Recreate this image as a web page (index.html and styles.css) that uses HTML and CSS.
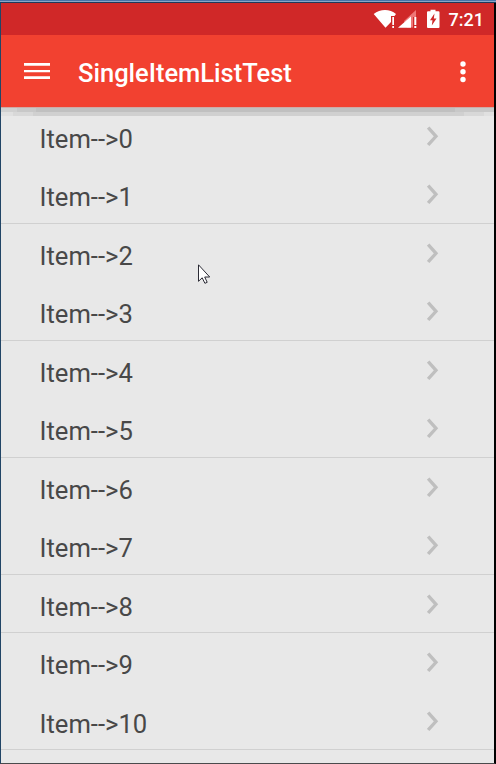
FILE: index.html
```html
<!DOCTYPE html>
<html lang="en">
<head>
<meta charset="utf-8">
<title>SingleItemListTest</title>
<link rel="stylesheet" href="styles.css">
</head>
<body>
<div class="desktop-strip"></div>
<div class="device">
  <header class="status-bar">
    <svg class="status-icons" width="68" height="24" viewBox="372 7 68 24" aria-hidden="true">
      <path fill="#fff" d="M373.700 14C377 11.300 381 10 385 10s8 1.300 11 4l-1.500 2H391v6L385.500 27.700z"/>
      <path fill="#fff" d="M392.300 17h1.700v8h-1.700zM392.300 26h1.700v2h-1.700z"/>
      <path fill="#e77" d="M404 21L416 10v7h-3v10.500h-6z"/>
      <path fill="#fff" d="M398 27.700L411 16.500v11.200z"/>
      <path fill="#fff" d="M414.300 17h2v8h-2zM414.300 26h2v2h-2z"/>
      <path fill="#fff" fill-rule="evenodd" d="M430.500 9.700h5v1.600h3q1 0 1 1V27q0 1-1 1h-10.500q-1 0-1-1V12.300q0-1 1-1h2.500zM434.500 13.500L430 20.300h2.500l-.7 5.200 4.700-7h-2.700z"/>
    </svg>
    <span class="clock">7:21</span>
  </header>
  <div class="toolbar">
    <svg class="menu" width="26" height="16" viewBox="0 0 26 16" aria-hidden="true">
      <path fill="#fff" d="M0 0h26v2.700H0zM0 7h26v2.300H0zM0 13.300h26V16H0z"/>
    </svg>
    <h1 class="title">SingleItemListTest</h1>
    <svg class="overflow" width="6" height="22" viewBox="0 0 6 22" aria-hidden="true">
      <g fill="#fff"><circle cx="3" cy="3" r="2.700"/><circle cx="3" cy="10.700" r="2.700"/><circle cx="3" cy="18.500" r="2.700"/></g>
    </svg>
    <div class="shadow"><i></i><i></i><i></i></div>
  </div>
  <svg width="0" height="0" class="defs" aria-hidden="true">
    <symbol id="chevron" viewBox="0 0 12 21"><path d="M1.200 1.500L9 10.300 1.200 19" fill="none" stroke="#bfbfbf" stroke-width="3.300"/></symbol>
  </svg>
  <ul class="list">
    <li><span>Item--&gt;0</span><svg><use href="#chevron"/></svg></li>
    <li class="line"><span>Item--&gt;1</span><svg><use href="#chevron"/></svg></li>
    <li><span>Item--&gt;2</span><svg><use href="#chevron"/></svg></li>
    <li class="line"><span>Item--&gt;3</span><svg><use href="#chevron"/></svg></li>
    <li><span>Item--&gt;4</span><svg><use href="#chevron"/></svg></li>
    <li class="line"><span>Item--&gt;5</span><svg><use href="#chevron"/></svg></li>
    <li><span>Item--&gt;6</span><svg><use href="#chevron"/></svg></li>
    <li class="line"><span>Item--&gt;7</span><svg><use href="#chevron"/></svg></li>
    <li class="line"><span>Item--&gt;8</span><svg><use href="#chevron"/></svg></li>
    <li><span>Item--&gt;9</span><svg><use href="#chevron"/></svg></li>
    <li class="line"><span>Item--&gt;10</span><svg><use href="#chevron"/></svg></li>
  </ul>
</div>
<svg class="cursor" width="13" height="21" viewBox="0 0 13 21" aria-hidden="true">
  <path d="M.5.800v16.500l3.700-3.500 2.700 5.500 2.300-1-2.500-5.300h5z" fill="#fff" stroke="#2b2b35"/>
</svg>
</body>
</html>
```

FILE: styles.css
```css
* { box-sizing: border-box; }
body {
  margin: 0;
  height: 764px;
  overflow: hidden;
  display: flex;
  flex-direction: column;
  position: relative;
  font-family: Roboto, sans-serif;
}
.desktop-strip {
  height: 3px;
  background: linear-gradient(#4674aa 0 1px, #8ba6c4 1px 2px, #1d3a5c 2px);
}
.device {
  flex: 1;
  min-height: 0;
  border-left: 1px solid #214566;
  border-right: 2px solid #000;
  border-bottom: 1px solid #4a4a4c;
  background: #e8e8e8;
  overflow: hidden;
}
.status-bar {
  height: 32px;
  padding: 4px 10px 0 0;
  background: #d02828;
  color: #fff;
  display: flex;
  justify-content: flex-end;
}
.status-icons { margin-right: 9px; }
.clock {
  font-size: 18px;
  font-weight: 500;
  line-height: 26px;
}
.toolbar {
  height: 72px;
  padding: 0 28px 0 23px;
  background: #f24130;
  display: flex;
  align-items: center;
  position: relative;
}
.title {
  margin: 4px 0 0 28px;
  flex: 1;
  color: #fff;
  font-size: 25.500px;
  font-weight: 500;
  line-height: 30px;
  white-space: nowrap;
}
.overflow { margin-top: 1px; }
.shadow {
  position: absolute;
  top: 100%;
  left: 0;
  right: 0;
}
.shadow i { display: block; height: 4px; }
.shadow i:nth-child(1) { height: 1px; background: #cfaaa6; }
.shadow i:nth-child(2) { background: linear-gradient(90deg, #d0d0d0 16px, #c8c8c8 16px 35px, #c0c0c0 35px 454px, #c8c8c8 454px); }
.shadow i:nth-child(3) { background: linear-gradient(90deg, #e0e0e0 12px, #d8d8d8 12px 32px, #d0d0d0 32px 463px, #d8d8d8 463px 483px, #e0e0e0 483px); }
.defs { display: block; }
.list {
  margin: 0;
  padding: 0;
  list-style: none;
}
.list li {
  height: 58px;
  padding: 0 55px 0 38.500px;
  display: flex;
  justify-content: space-between;
  align-items: flex-start;
  color: #484848;
  font-size: 25.600px;
}
.list li:nth-child(even) { height: 59px; }
.list .line { border-bottom: 1px solid #d0d0d0; }
.list span { line-height: 30px; margin-top: 17px; }
.list svg { width: 12px; height: 21px; margin-top: 19px; }
.cursor {
  position: absolute;
  left: 198px;
  top: 264px;
}
```
